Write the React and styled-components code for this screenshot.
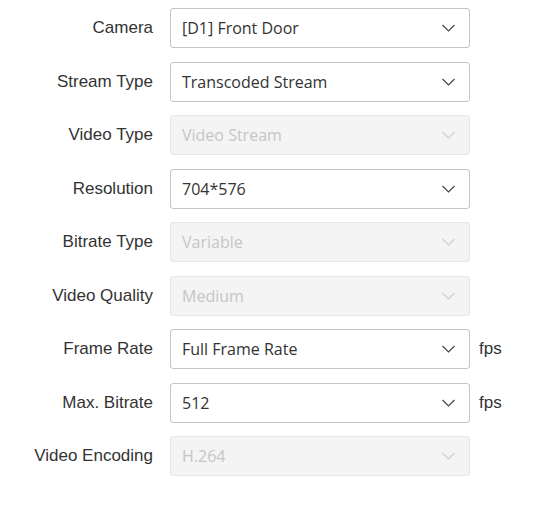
import React from 'react';
import styled, { createGlobalStyle } from 'styled-components';

const GlobalStyle = createGlobalStyle`
  body {
    margin: 0;
    background: #fff;
    font-family: "Liberation Sans", Arial, sans-serif;
  }
`;

const Form = styled.div`
  display: flex;
  flex-direction: column;
  gap: 13.5px;
  padding: 8px 0 0 0;
  width: 538px;
`;

const Row = styled.div`
  display: grid;
  grid-template-columns: 155px 300px auto;
  column-gap: 15px;
  align-items: center;
  height: 40px;
`;

const Label = styled.label`
  text-align: right;
  font-size: 17px;
  color: #333;
  padding-right: 2px;
`;

const Select = styled.div`
  box-sizing: border-box;
  height: 40px;
  display: flex;
  align-items: center;
  justify-content: space-between;
  padding: 0 14px 0 11px;
  border: 1px solid ${p => (p.disabled ? '#e6e6e6' : '#c4c4c4')};
  border-radius: 3px;
  background: ${p => (p.disabled ? '#f4f4f4' : '#fff')};
  color: ${p => (p.disabled ? '#c6c6c6' : '#333')};
  font-family: "Open Sans", "Noto Sans", sans-serif;
  font-size: 16px;
`;

const Unit = styled.span`
  font-size: 17px;
  color: #333;
  margin-left: -6px;
`;

const Chevron = ({ color }) => (
  <svg width="13" height="8" viewBox="0 0 13 8">
    <path d="M0.5 1 L6.5 7 L12.5 1" fill="none" stroke={color} strokeWidth="1.2" />
  </svg>
);

const fields = [
  { label: 'Camera', value: '[D1] Front Door' },
  { label: 'Stream Type', value: 'Transcoded Stream' },
  { label: 'Video Type', value: 'Video Stream', disabled: true },
  { label: 'Resolution', value: '704*576' },
  { label: 'Bitrate Type', value: 'Variable', disabled: true },
  { label: 'Video Quality', value: 'Medium', disabled: true },
  { label: 'Frame Rate', value: 'Full Frame Rate', unit: 'fps' },
  { label: 'Max. Bitrate', value: '512', unit: 'fps' },
  { label: 'Video Encoding', value: 'H.264', disabled: true },
];

export default function App() {
  return (
    <>
      <GlobalStyle />
      <Form>
        {fields.map(f => (
          <Row key={f.label}>
            <Label>{f.label}</Label>
            <Select disabled={f.disabled}>
              <span>{f.value}</span>
              <Chevron color={f.disabled ? '#cfcfcf' : '#444'} />
            </Select>
            {f.unit ? <Unit>{f.unit}</Unit> : <span />}
          </Row>
        ))}
      </Form>
    </>
  );
}
